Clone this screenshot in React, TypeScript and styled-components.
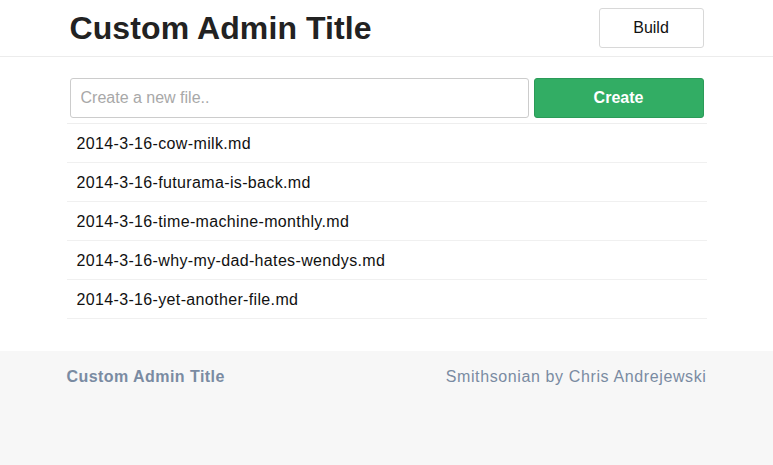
import React from "react";
import styled, { createGlobalStyle } from "styled-components";

const Global = createGlobalStyle`
  html, body { margin: 0; padding: 0; background: #fff; }
  body { font-family: "Liberation Sans", Arial, sans-serif; color: #111; }
  * { box-sizing: border-box; }
`;

const Header = styled.header`
  border-bottom: 1px solid #ececec;
  height: 57px;
`;

const HeaderInner = styled.div`
  width: 634px;
  margin: 0 auto;
  display: flex;
  align-items: center;
  justify-content: space-between;
  height: 56px;
`;

const Title = styled.h1`
  margin: 0;
  font-size: 32px;
  font-weight: 700;
  color: #222;
  letter-spacing: 0.1px;
  padding-top: 1px;
`;

const BuildButton = styled.button`
  width: 105px;
  height: 40px;
  margin-top: -1px;
  background: #fff;
  border: 1px solid #d8d8d8;
  border-radius: 3px;
  font-family: inherit;
  font-size: 16px;
  color: #111;
`;

const Main = styled.main`
  width: 640px;
  margin: 0 auto;
  padding-top: 21px;
  padding-bottom: 32px;
`;

const Form = styled.div`
  display: flex;
  gap: 5px;
  padding: 0 3px 5px;
  border-bottom: 1px solid #eee;
`;

const Input = styled.input`
  flex: 0 0 459px;
  height: 40px;
  border: 1px solid #ccc;
  border-radius: 3px;
  padding: 0 10px;
  font-family: inherit;
  font-size: 16px;
  color: #333;
  outline: none;
  &::placeholder { color: #a8a8a8; }
`;

const CreateButton = styled.button`
  flex: 1;
  height: 40px;
  background: #32ad64;
  border: 1px solid #2b9b58;
  border-radius: 3px;
  color: #fff;
  font-family: inherit;
  font-size: 16px;
  font-weight: 700;
`;

const FileList = styled.ul`
  list-style: none;
  margin: 0;
  padding: 0;
`;

const FileRow = styled.li`
  height: 39px;
  display: flex;
  align-items: center;
  padding: 1px 10px 0;
  font-size: 16px;
  letter-spacing: 0.35px;
  color: #111;
  border-bottom: 1px solid #f0f0f0;
`;

const Footer = styled.footer`
  background: #f7f7f7;
  height: 120px;
`;

const FooterInner = styled.div`
  width: 640px;
  margin: 0 auto;
  display: flex;
  justify-content: space-between;
  align-items: baseline;
  padding-top: 17px;
`;

const FooterTitle = styled.span`
  font-size: 16px;
  letter-spacing: 0.45px;
  font-weight: 700;
  color: #7a8ba2;
`;

const Credit = styled.span`
  font-size: 16px;
  letter-spacing: 0.62px;
  color: #7a8ba2;
`;

const files = [
  "2014-3-16-cow-milk.md",
  "2014-3-16-futurama-is-back.md",
  "2014-3-16-time-machine-monthly.md",
  "2014-3-16-why-my-dad-hates-wendys.md",
  "2014-3-16-yet-another-file.md",
];

export default function App() {
  return (
    <>
      <Global />
      <Header>
        <HeaderInner>
          <Title>Custom Admin Title</Title>
          <BuildButton>Build</BuildButton>
        </HeaderInner>
      </Header>
      <Main>
        <Form>
          <Input placeholder="Create a new file.." />
          <CreateButton>Create</CreateButton>
        </Form>
        <FileList>
          {files.map((f) => (
            <FileRow key={f}>{f}</FileRow>
          ))}
        </FileList>
      </Main>
      <Footer>
        <FooterInner>
          <FooterTitle>Custom Admin Title</FooterTitle>
          <Credit>Smithsonian by Chris Andrejewski</Credit>
        </FooterInner>
      </Footer>
    </>
  );
}
